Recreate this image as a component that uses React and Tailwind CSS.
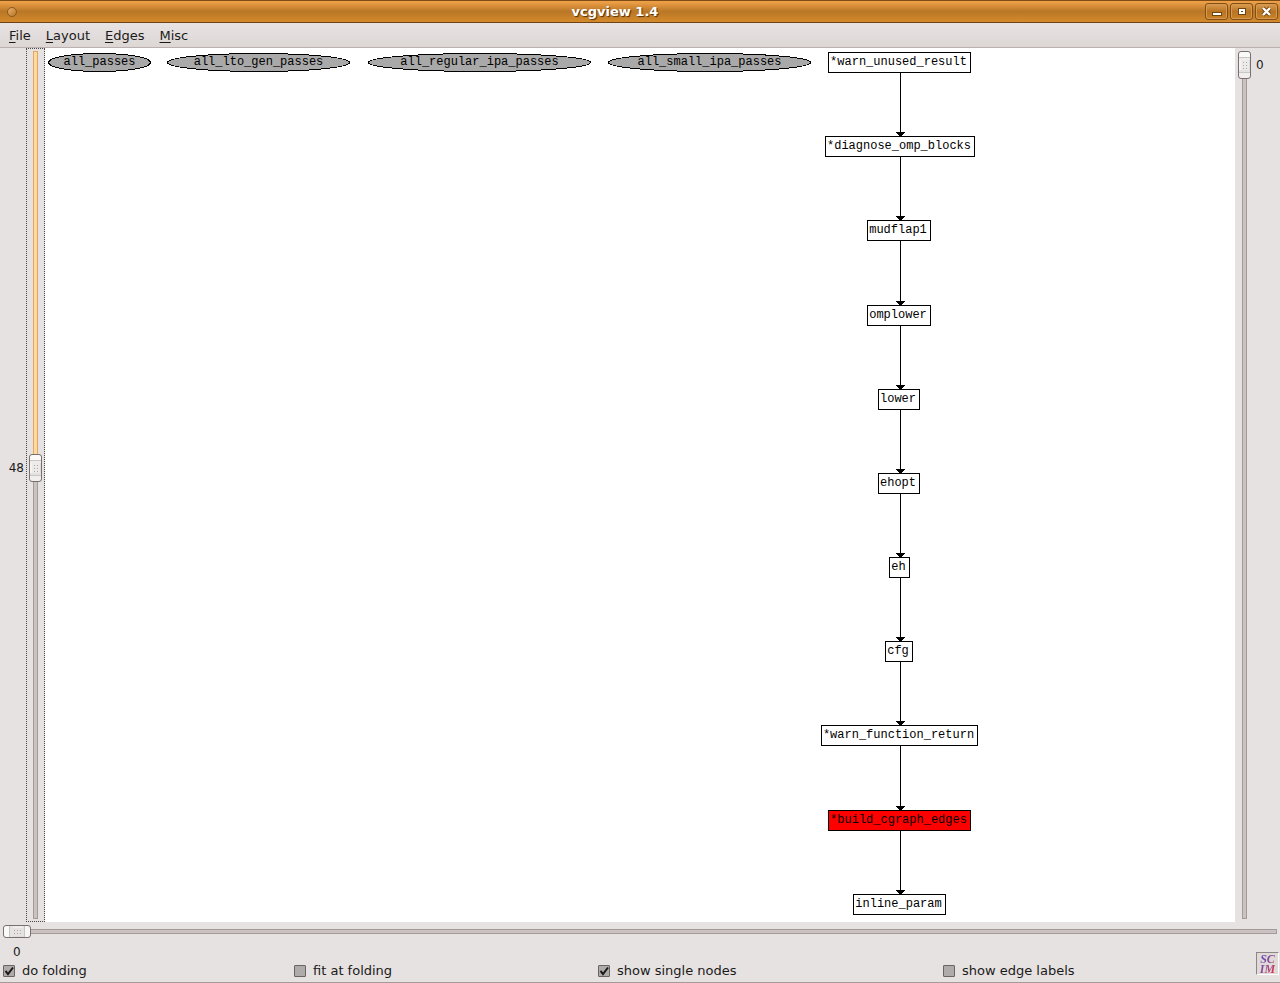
import React from "react";

const menus = ["File", "Layout", "Edges", "Misc"];

const folded = [
  { label: "all_passes", x: 3, w: 103 },
  { label: "all_lto_gen_passes", x: 122, w: 183 },
  { label: "all_regular_ipa_passes", x: 323, w: 223 },
  { label: "all_small_ipa_passes", x: 563, w: 203 },
];

const nodes = [
  { label: "*warn_unused_result", x: 783, y: 4, w: 143 },
  { label: "*diagnose_omp_blocks", x: 780, y: 88, w: 150 },
  { label: "mudflap1", x: 822, y: 172, w: 64 },
  { label: "omplower", x: 822, y: 257, w: 64 },
  { label: "lower", x: 833, y: 341, w: 42 },
  { label: "ehopt", x: 833, y: 425, w: 42 },
  { label: "eh", x: 844, y: 509, w: 21 },
  { label: "cfg", x: 840, y: 593, w: 28 },
  { label: "*warn_function_return", x: 776, y: 677, w: 157 },
  { label: "*build_cgraph_edges", x: 783, y: 762, w: 143, hot: true },
  { label: "inline_param", x: 808, y: 846, w: 93 },
];

const checks = [
  { id: "fold", label: "do folding", on: true },
  { id: "fit", label: "fit at folding", on: false },
  { id: "single", label: "show single nodes", on: true },
  { id: "edge", label: "show edge labels", on: false },
];

const thumbBase =
  "m-0 block cursor-pointer appearance-none bg-transparent outline-none [&::-webkit-slider-thumb]:appearance-none [&::-webkit-slider-thumb]:rounded-[3px] [&::-webkit-slider-thumb]:border [&::-webkit-slider-thumb]:border-solid [&::-webkit-slider-thumb]:border-[#77706e] ";
const vertical =
  thumbBase +
  "h-full w-[13px] [writing-mode:vertical-lr] [&::-webkit-slider-thumb]:h-[28px] [&::-webkit-slider-thumb]:w-[13px] [&::-webkit-slider-thumb]:bg-[linear-gradient(to_bottom,#fbfafa_5px,#c9c5c4_5px,#c9c5c4_6px,#efedec_6px,#efedec_8px,transparent_8px,transparent_18px,#e4e1e0_18px,#e4e1e0_20px,#c9c5c4_20px,#c9c5c4_21px,#f1efee_21px),linear-gradient(to_right,#f4f3f2_2px,transparent_2px,transparent_10px,#dedad9_10px),radial-gradient(circle_at_center,#aaa5a3_0.7px,#edebea_1px)] [&::-webkit-slider-thumb]:bg-[size:100%_100%,100%_100%,3px_3px]";
const horizontal =
  thumbBase +
  "h-[13px] w-full [&::-webkit-slider-thumb]:h-[13px] [&::-webkit-slider-thumb]:w-[28px] [&::-webkit-slider-thumb]:bg-[linear-gradient(to_right,#fbfafa_5px,#c9c5c4_5px,#c9c5c4_6px,#e6e3e2_6px,#e6e3e2_9px,transparent_9px,transparent_19px,#e4e1e0_19px,#e4e1e0_20px,#c9c5c4_20px,#c9c5c4_21px,#f7f6f5_21px),linear-gradient(to_bottom,#f0eeed_2px,transparent_2px,transparent_10px,#dedad9_10px),radial-gradient(circle_at_center,#aaa5a3_0.7px,#e6e3e2_1px)] [&::-webkit-slider-thumb]:bg-[size:100%_100%,100%_100%,3px_3px]";

function WindowButton({ label, children }) {
  return (
    <button
      aria-label={label}
      className="flex h-[17px] w-[23px] items-center justify-center rounded-[3px] border border-[#7f4f17] bg-linear-to-b from-[#dc9d50] via-[#b87422] to-[#c98327] shadow-[inset_0_0_0_1px_#d9994e]"
    >
      <svg width="13" height="13" viewBox="0 0 13 13" shapeRendering="crispEdges" aria-hidden="true">
        {children}
      </svg>
    </button>
  );
}

function TitleBar() {
  return (
    <header className="flex h-[23px] shrink-0 items-center border-t border-b border-t-[#7d4b14] border-b-[#6f4217] bg-linear-to-b from-[#ed9f47] from-5% via-[#b97726] via-50% to-[#d58a2b]">
      <button aria-label="Window menu" className="ml-[7px] size-[10px] rounded-full border border-[#8c581c] bg-linear-to-br from-[#e9b26c] to-[#b9741f]" />
      <h1 className="flex-1 pl-2 text-center text-[13px] leading-5 font-bold text-white [text-shadow:1px_1px_1px_#4d2f0b]">vcgview 1.4</h1>
      <div className="flex gap-[2px] pr-[2px]">
        <WindowButton label="Minimize">
          <path d="M2 7h10v4H2z" fill="#704410" />
          <path d="M3 8h8v2H3z" fill="#fff" />
        </WindowButton>
        <WindowButton label="Maximize">
          <path d="M3 3h8v7H3z" fill="#704410" />
          <path d="M4 4h6v5H4z" fill="#fff" />
          <path d="M6 6h2v1H6z" fill="#704410" />
        </WindowButton>
        <WindowButton label="Close">
          <path d="M3 3l7 7M10 3l-7 7" stroke="#704410" strokeWidth="4" shapeRendering="auto" />
          <path d="M3 3l7 7M10 3l-7 7" stroke="#fff" strokeWidth="2.4" shapeRendering="auto" />
        </WindowButton>
      </div>
    </header>
  );
}

function MenuBar() {
  return (
    <nav className="flex h-[25px] shrink-0 items-center gap-[15px] border-b border-[#b9b0af] bg-linear-to-b from-[#e8e4e3] to-[#dcd6d5] pt-[2px] pl-[9px]">
      {menus.map((m) => (
        <button key={m} className="leading-5">
          <span className="underline underline-offset-2">{m[0]}</span>
          {m.slice(1)}
        </button>
      ))}
    </nav>
  );
}

function Graph() {
  return (
    <main className="relative min-w-0 flex-1 overflow-hidden bg-white font-['Liberation_Mono',monospace] text-[12px] leading-[19px] text-black">
      <svg className="absolute inset-0 size-full" shapeRendering="crispEdges" aria-hidden="true">
        {folded.map((f) => (
          <ellipse key={f.label} cx={f.x + f.w / 2} cy="14.5" rx={(f.w - 1) / 2} ry="9" fill="#a9a9a9" stroke="#000" />
        ))}
        {nodes.slice(1).map((n, i) => (
          <g key={n.label}>
            <path d={`M855.5 ${nodes[i].y + 21}V${n.y}`} stroke="#000" />
            <path d={`M851 ${n.y - 4}h9v1h-1v1h-1v1h-1v1h-3v-1h-1v-1h-1v-1h-1z`} fill="#000" />
          </g>
        ))}
      </svg>
      {folded.map((f) => (
        <span key={f.label} className="absolute top-[5px] text-center" style={{ left: f.x, width: f.w }}>
          {f.label}
        </span>
      ))}
      {nodes.map((n) => (
        <div
          key={n.label}
          className={"absolute flex h-[21px] justify-center border border-black pr-[2px] whitespace-nowrap " + (n.hot ? "bg-[#ff0000]" : "bg-white")}
          style={{ left: n.x, top: n.y, width: n.w }}
        >
          {n.label}
        </div>
      ))}
    </main>
  );
}

function Check({ id, label, on }) {
  return (
    <div className="flex items-center gap-[7px]">
      <span className="relative size-[12px]">
        <input id={id} type="checkbox" defaultChecked={on} className="peer m-0 block size-[12px] appearance-none rounded-[1px] border border-[#686462] bg-[#afabaa]" />
        <svg viewBox="0 0 12 12" className="pointer-events-none absolute inset-0 hidden size-[12px] peer-checked:block" aria-hidden="true">
          <path d="M2.5 5.8L5 9L10 2.5" fill="none" stroke="#1a1a1a" strokeWidth="2" />
        </svg>
      </span>
      <label htmlFor={id} className="leading-4">{label}</label>
    </div>
  );
}

export default function App() {
  return (
    <div className="flex h-screen flex-col bg-[#e6e2e1] font-['DejaVu_Sans',sans-serif] text-[13px] text-[#1a1a1a]">
      <TitleBar />
      <MenuBar />
      <div className="flex min-h-0 flex-1">
        <label htmlFor="ypos" className="flex w-[26px] flex-col pr-[2px] text-right text-[12px] leading-4">
          <span className="grow-[48]" />
          <span>48</span>
          <span className="grow-[52]" />
        </label>
        <div className="flex w-[19px] justify-center border border-dotted border-[#4a4646] py-[2px]">
          <div className="flex w-[5px] justify-center bg-[linear-gradient(to_bottom,#e0a860_48%,#a39a99_48%)] py-px">
            <div className="flex w-[3px] justify-center bg-[linear-gradient(to_bottom,#ffd9a0_48%,#cac3c2_48%)]">
              <div className="w-[13px] shrink-0">
                <input id="ypos" type="range" min="0" max="100" defaultValue="48" className={vertical} />
              </div>
            </div>
          </div>
        </div>
        <Graph />
        <div className="flex w-[19px] justify-center py-[3px]">
          <div className="flex w-[5px] justify-center border border-[#a39a99] bg-[#cac3c2]">
            <div className="-my-px w-[13px] shrink-0">
              <input id="zoom" type="range" min="0" max="100" defaultValue="0" className={vertical} />
            </div>
          </div>
        </div>
        <label htmlFor="zoom" className="w-[26px] pt-[9px] pl-[2px] text-[12px] leading-4">0</label>
      </div>
      <footer className="relative shrink-0 border-b border-[#a39a99] pt-[3px]">
        <div className="flex h-[13px] items-center px-[3px]">
          <div className="flex h-[5px] w-full items-center border-y border-r border-[#a39a99] bg-[#cac3c2]">
            <input id="xpos" type="range" min="0" max="100" defaultValue="0" className={horizontal} />
          </div>
        </div>
        <label htmlFor="xpos" className="block pt-[6px] pl-[13px] text-[12px] leading-4">0</label>
        <div className="grid grid-cols-[291fr_304fr_345fr_337fr] pt-[3px] pb-[3px] pl-[3px]">
          {checks.map((c) => (
            <Check key={c.id} {...c} />
          ))}
        </div>
        <button aria-label="Input method" className="absolute right-px bottom-[7px] flex size-[23px] items-center justify-center border border-t-[#8d8685] border-r-white border-b-white border-l-[#8d8685] bg-[#dfd9d8] font-['Liberation_Serif',serif] text-[12px] leading-[10px] font-bold italic">
          <span className="bg-linear-to-br from-[#5a48c8] via-[#8b4792] to-[#e8203c] bg-clip-text text-transparent">
            SC
            <br />
            IM
          </span>
        </button>
      </footer>
    </div>
  );
}
